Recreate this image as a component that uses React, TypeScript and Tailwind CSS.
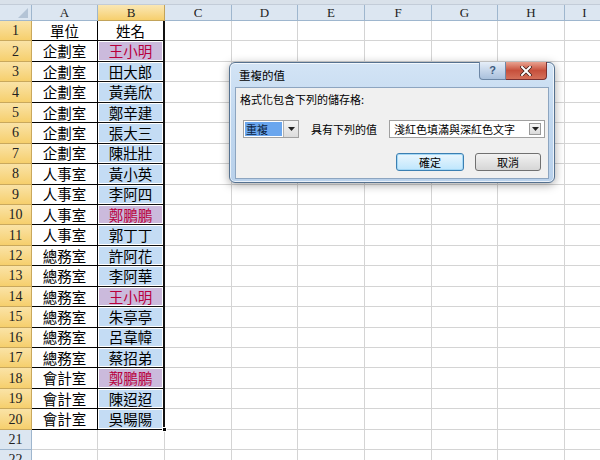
const data: [string, string, boolean][] = [
  ["單位", "姓名", false],
  ["企劃室", "王小明", true],
  ["企劃室", "田大郎", false],
  ["企劃室", "黃堯欣", false],
  ["企劃室", "鄭辛建", false],
  ["企劃室", "張大三", false],
  ["企劃室", "陳壯壯", false],
  ["人事室", "黃小英", false],
  ["人事室", "李阿四", false],
  ["人事室", "鄭鵬鵬", true],
  ["人事室", "郭丁丁", false],
  ["總務室", "許阿花", false],
  ["總務室", "李阿華", false],
  ["總務室", "王小明", true],
  ["總務室", "朱亭亭", false],
  ["總務室", "呂韋幃", false],
  ["總務室", "蔡招弟", false],
  ["會計室", "鄭鵬鵬", true],
  ["會計室", "陳迢迢", false],
  ["會計室", "吳暘陽", false],
];

const cols = ["C", "D", "E", "F", "G", "H", "I"];
const colW = ["w-[67px]", "w-[66px]", "w-[67px]", "w-[67px]", "w-[66px]", "w-[67px]", "w-[40px]"];

function GridCells() {
  return (
    <>
      {cols.map((c, i) => (
        <div key={c} className={`${colW[i]} shrink-0 h-full border-r border-b border-[#d4d4d4]`} />
      ))}
    </>
  );
}

function Dialog() {
  return (
    <div className="absolute left-[229px] top-[62px] w-[326px] h-[121px] rounded-[6px] border border-[#55718f] bg-gradient-to-b from-[#d3e4f5] via-[#c0d7ef] to-[#b9d1eb] shadow-[0_2px_10px_rgba(0,0,0,0.35),inset_0_0_0_1px_rgba(255,255,255,0.7)] flex flex-col px-[5px] pb-[3px]">
      <div className="h-[24px] flex items-start shrink-0">
        <div className="pl-[4px] pt-[7px] text-[11.5px] leading-none text-black">重複的值</div>
        <div className="ml-auto flex mr-[2px] -mt-px">
          <div className="w-[27px] h-[18px] rounded-bl-[4px] border border-[#6d87a6] border-t-0 bg-gradient-to-b from-[#e6eef8] via-[#c6d6ea] to-[#a9c0dc] flex items-center justify-center text-[11px] font-bold text-[#3c5a7e] leading-none" style={{ fontFamily: "'Liberation Sans', sans-serif" }}>
            ?
          </div>
          <div className="w-[41px] h-[18px] rounded-br-[4px] border border-[#7a3030] border-t-0 border-l-0 bg-gradient-to-b from-[#e8a290] via-[#c7503c] to-[#d4705a] flex items-center justify-center">
            <svg width="12" height="10" viewBox="0 0 12 10">
              <path d="M2 1 L10 9 M10 1 L2 9" stroke="#3a1a14" strokeWidth="3.4" strokeLinecap="square" />
              <path d="M2 1 L10 9 M10 1 L2 9" stroke="#ffffff" strokeWidth="2" strokeLinecap="square" />
            </svg>
          </div>
        </div>
      </div>
      <div className="flex-1 bg-[#f0f0f0] border border-[#8da5c0] flex flex-col text-[11px] text-black leading-none">
        <div className="pl-[4px] pt-[6px]">格式化包含下列的儲存格:</div>
        <div className="flex items-center mt-[15px] pl-[7px] h-[18px]">
          <div className="w-[56px] h-[18px] border border-[#a0a0a0] bg-white flex">
            <div className="flex-1 m-px bg-[#6aa6ee] flex items-center pl-px text-[#0c1f40]">重複</div>
            <div className="w-[15px] h-full bg-gradient-to-b from-[#f4f4f4] to-[#dcdcdc] border-l border-[#b0b0b0] flex items-center justify-center">
              <svg width="7" height="4" viewBox="0 0 7 4"><path d="M0 0 H7 L3.5 4 Z" fill="#222" /></svg>
            </div>
          </div>
          <div className="ml-[12px]">具有下列的值</div>
          <div className="ml-[12px] w-[156px] h-[18px] border border-[#a0a0a0] bg-white flex items-center">
            <div className="flex-1 pl-[4px]">淺紅色填滿與深紅色文字</div>
            <div className="w-[12px] h-[12px] mr-[3px] border border-[#9a9a9a] bg-gradient-to-b from-[#f6f6f6] to-[#dadada] flex items-center justify-center">
              <svg width="7" height="4" viewBox="0 0 7 4"><path d="M0 0 H7 L3.5 4 Z" fill="#222" /></svg>
            </div>
          </div>
        </div>
        <div className="flex justify-end mt-[15px] pr-[7px] gap-[11px]">
          <div className="w-[68px] h-[18px] rounded-[3px] border border-[#3c7fb1] bg-gradient-to-b from-[#eaf6fd] to-[#bee6fd] shadow-[inset_0_0_0_1px_#a4d8f6] flex items-center justify-center">確定</div>
          <div className="w-[66px] h-[18px] rounded-[3px] border border-[#707070] bg-gradient-to-b from-[#f2f2f2] to-[#d6d6d6] flex items-center justify-center">取消</div>
        </div>
      </div>
    </div>
  );
}

export default function App() {
  const cjk = { fontFamily: "'Noto Sans CJK TC', 'Noto Sans', sans-serif" };
  const serif = { fontFamily: "'Liberation Serif', 'DejaVu Serif', serif" };
  return (
    <div className="relative w-[600px] h-[460px] overflow-hidden bg-white" style={cjk}>
      <div className="h-[5px] bg-[#d9e1ea] border-b border-[#c3ccd8]" />
      <div className="flex h-[16px]" style={serif}>
        <div className="w-[32px] shrink-0 h-full bg-[#dce6f1] border-r border-b border-[#9eb6ce] relative">
          <div className="absolute right-[3px] bottom-[2px] w-0 h-0 border-l-[10px] border-l-transparent border-b-[10px] border-b-[#b4c4d6]" />
        </div>
        <div className="w-[66px] shrink-0 h-full bg-[#dce6f1] border-r border-b border-[#9eb6ce] flex items-center justify-center text-[13px] text-[#222]">A</div>
        <div className="w-[67px] shrink-0 h-full bg-gradient-to-b from-[#fae7b4] to-[#f6cf6c] border-r border-b border-[#c2a35a] flex items-center justify-center text-[13px] text-[#222]">B</div>
        {cols.map((c, i) => (
          <div key={c} className={`${colW[i]} shrink-0 h-full bg-[#dce6f1] border-r border-b border-[#9eb6ce] flex items-center justify-center text-[13px] text-[#222]`}>{c}</div>
        ))}
      </div>
      {data.map(([a, b, dup], i) => {
        const first = i === 0;
        const last = i === data.length - 1;
        return (
          <div key={i} className="flex h-[20.45px]">
            <div className="w-[32px] shrink-0 h-full bg-gradient-to-b from-[#fae3a6] to-[#f6cf6c] border-r border-b border-[#c9a85c] flex items-center justify-center text-[14px] text-[#222]" style={serif}>
              {i + 1}
            </div>
            <div className="w-[66px] shrink-0 h-full border-r border-b border-black flex items-center justify-center text-[14.5px] text-black">{a}</div>
            <div className="w-[67px] shrink-0 h-full border-r-2 border-b border-[#111] relative">
              <div className={`absolute inset-[1px] flex items-center justify-center text-[14.5px] ${first ? "bg-white text-black" : dup ? "bg-[#cbbadc] text-[#b8003c]" : "bg-[#c4dcf4] text-black"}`}>{b}</div>
              {last && <div className="absolute -right-[4px] -bottom-[3px] w-[5px] h-[5px] bg-black border border-white" />}
            </div>
            <GridCells />
          </div>
        );
      })}
      {[21, 22].map((n) => (
        <div key={n} className="flex h-[20.45px]">
          <div className="w-[32px] shrink-0 h-full bg-[#dce6f1] border-r border-b border-[#9eb6ce] flex items-center justify-center text-[14px] text-[#222]" style={serif}>
            {n}
          </div>
          <div className="w-[66px] shrink-0 h-full border-r border-b border-[#d4d4d4]" />
          <div className="w-[67px] shrink-0 h-full border-r border-b border-[#d4d4d4]" />
          <GridCells />
        </div>
      ))}
      <Dialog />
    </div>
  );
}
